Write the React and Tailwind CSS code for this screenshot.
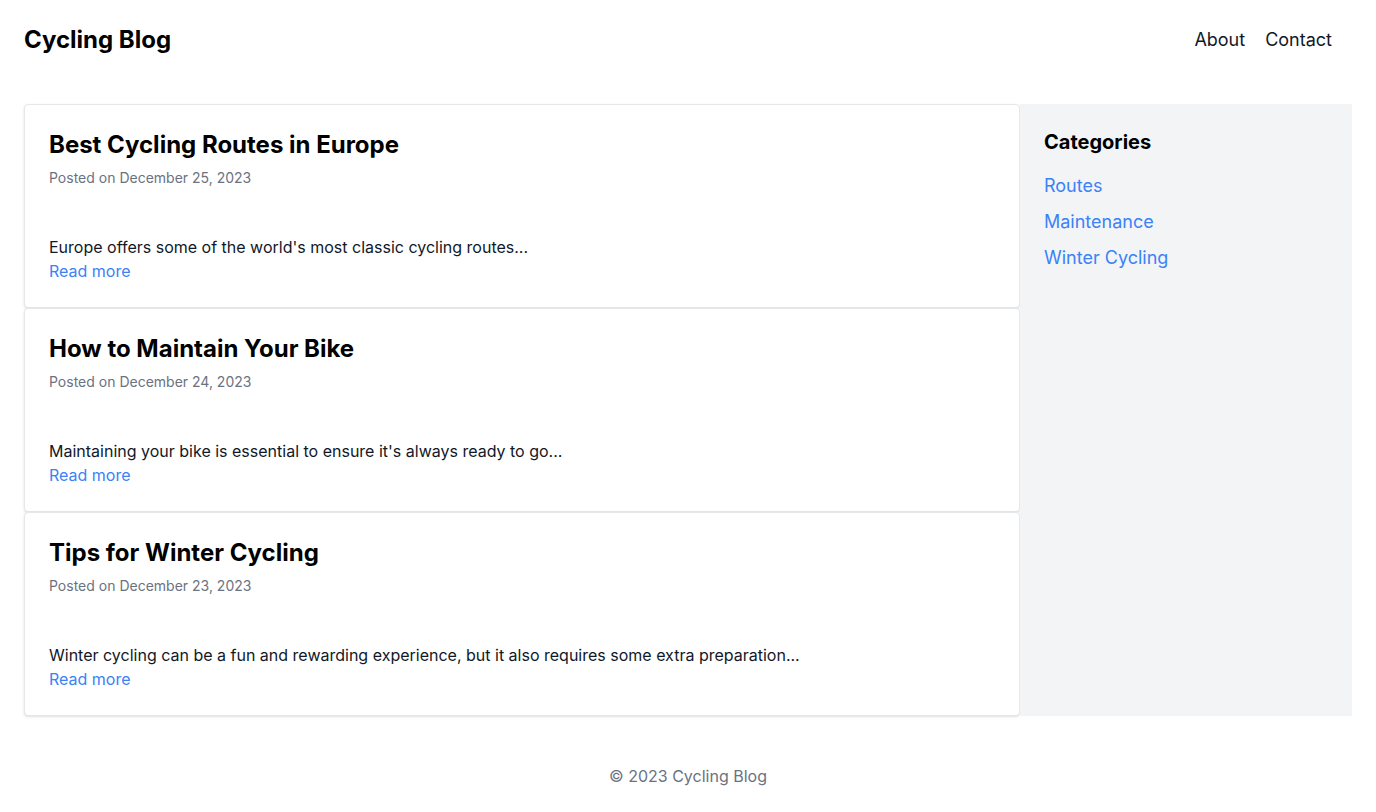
export default function App() {
  const posts = [
    {
      title: "Best Cycling Routes in Europe",
      date: "December 25, 2023",
      excerpt: "Europe offers some of the world's most classic cycling routes...",
    },
    {
      title: "How to Maintain Your Bike",
      date: "December 24, 2023",
      excerpt: "Maintaining your bike is essential to ensure it's always ready to go...",
    },
    {
      title: "Tips for Winter Cycling",
      date: "December 23, 2023",
      excerpt:
        "Winter cycling can be a fun and rewarding experience, but it also requires some extra preparation...",
    },
  ];
  return (
    <div className="min-h-screen bg-white text-black" style={{ fontFamily: "Inter, 'Noto Sans', sans-serif" }}>
      <header className="flex items-center justify-between p-6">
        <h1 className="text-2xl font-bold">Cycling Blog</h1>
        <nav className="flex text-lg text-[#111827]">
          <a className="mr-5" href="#">About</a>
          <a className="mr-5" href="#">Contact</a>
        </nav>
      </header>
      <main className="mt-6 grid grid-cols-4 px-6">
        <div className="col-span-3 flex flex-col">
          {posts.map((p) => (
            <article key={p.title} className="rounded border border-[#e5e7eb] bg-white p-6 shadow-sm">
              <h2 className="mb-[7px] text-2xl font-bold">{p.title}</h2>
              <p className="mb-[47px] text-sm text-[#6b7280]">Posted on {p.date}</p>
              <p className="text-base text-[#111827]">{p.excerpt}</p>
              <a href="#" className="text-base text-[#3b82f6]">Read more</a>
            </article>
          ))}
        </div>
        <aside className="col-span-1 bg-[#f3f4f6] p-6">
          <h3 className="mb-4 text-xl font-bold">Categories</h3>
          <ul className="flex flex-col gap-2 text-lg text-[#3b82f6]">
            <li><a href="#">Routes</a></li>
            <li><a href="#">Maintenance</a></li>
            <li><a href="#">Winter Cycling</a></li>
          </ul>
        </aside>
      </main>
      <footer className="mt-6 p-6 text-center text-base text-[#6b7280]">© 2023 Cycling Blog</footer>
    </div>
  );
}
